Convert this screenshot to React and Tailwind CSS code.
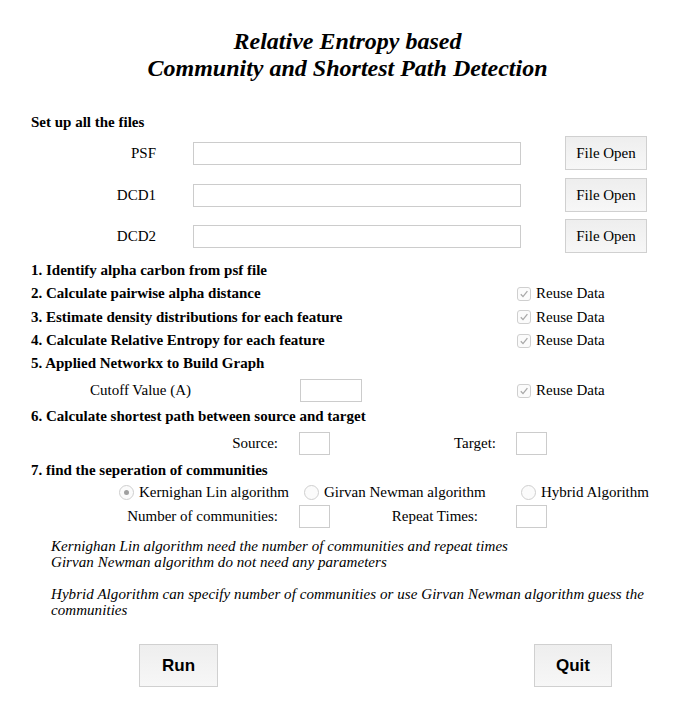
import React from "react";

const Check = () => (
  <span className="flex items-center justify-center w-[14px] h-[14px] border border-[#cfcfcf] rounded-[3px] bg-[#fbfbfb]">
    <svg width="10" height="10" viewBox="0 0 10 10">
      <path d="M1.8 5.2 L4 7.6 L8.4 2.2" fill="none" stroke="#a8a8a8" strokeWidth="1.3" />
    </svg>
  </span>
);

const Reuse = () => (
  <div className="flex items-center gap-[5px]">
    <Check />
    <span>Reuse Data</span>
  </div>
);

const Radio = ({ on }) => (
  <span className="flex items-center justify-center w-[15px] h-[15px] rounded-full border border-[#cfcfcf] bg-[#fbfbfb]">
    {on && <span className="w-[5px] h-[5px] rounded-full bg-[#a0a0a0]" />}
  </span>
);

const Box = ({ w }) => (
  <div className={`h-[23px] border border-[#cccccc] bg-white ${w}`} />
);

const FileRow = ({ label, mt }) => (
  <div className={`flex items-center h-[34px] ${mt}`}>
    <div className="w-[156px] text-right">{label}</div>
    <div className="ml-[37px] w-[328px] h-[23px] border border-[#cccccc] bg-white" />
    <button className="ml-[44px] w-[82px] h-[34px] border border-[#d0d0d0] bg-gradient-to-b from-[#eeeeee] to-[#f7f7f7] text-[15px]">
      File Open
    </button>
  </div>
);

export default function App() {
  return (
    <div className="w-[695px] h-[725px] bg-white text-black text-[15px] leading-none font-['Liberation_Serif',serif]">
      <div className="pt-[28px] text-center font-bold italic text-[24px] leading-[27px]">
        <div>Relative Entropy based</div>
        <div>Community and Shortest Path Detection</div>
      </div>

      <div className="mt-[30px] h-[20px] flex items-center pl-[31px] font-bold">Set up all the files</div>

      <div className="mt-[4px]">
        <FileRow label="PSF" mt="" />
        <FileRow label="DCD1" mt="mt-[8px]" />
        <FileRow label="DCD2" mt="mt-[7px]" />
      </div>

      <div className="mt-[6px]">
        <div className="h-[23.33px] flex items-center pl-[31px] font-bold">1. Identify alpha carbon from psf file</div>
        <div className="h-[23.33px] flex items-center pl-[31px]">
          <span className="w-[486px] font-bold">2. Calculate pairwise alpha distance</span>
          <Reuse />
        </div>
        <div className="h-[23.33px] flex items-center pl-[31px]">
          <span className="w-[486px] font-bold">3. Estimate density distributions for each feature</span>
          <Reuse />
        </div>
        <div className="h-[23.33px] flex items-center pl-[31px]">
          <span className="w-[486px] font-bold">4. Calculate Relative Entropy for each feature</span>
          <Reuse />
        </div>
        <div className="h-[23.33px] flex items-center pl-[31px] font-bold">5. Applied Networkx to Build Graph</div>
      </div>

      <div className="h-[30px] flex items-center pl-[90px]">
        <span className="w-[210px]">Cutoff Value (A)</span>
        <Box w="w-[62px]" />
        <span className="ml-[155px]"><Reuse /></span>
      </div>

      <div className="h-[21px] flex items-center pl-[31px] font-bold">6. Calculate shortest path between source and target</div>

      <div className="h-[33px] flex items-center">
        <span className="w-[278px] text-right">Source:</span>
        <span className="ml-[21px]"><Box w="w-[31px]" /></span>
        <span className="w-[166px] text-right">Target:</span>
        <span className="ml-[20px]"><Box w="w-[31px]" /></span>
      </div>

      <div className="h-[21px] flex items-center pl-[31px] font-bold">7. find the seperation of communities</div>

      <div className="h-[24px] flex items-center pl-[119px]">
        <div className="w-[185px] flex items-center gap-[5px]">
          <Radio on />
          <span>Kernighan Lin algorithm</span>
        </div>
        <div className="w-[217px] flex items-center gap-[5px]">
          <Radio />
          <span>Girvan Newman algorithm</span>
        </div>
        <div className="flex items-center gap-[5px]">
          <Radio />
          <span>Hybrid Algorithm</span>
        </div>
      </div>

      <div className="h-[24px] flex items-center">
        <span className="w-[278px] text-right">Number of communities:</span>
        <span className="ml-[21px]"><Box w="w-[31px]" /></span>
        <span className="w-[148px] text-right">Repeat Times:</span>
        <span className="ml-[38px]"><Box w="w-[31px]" /></span>
      </div>

      <div className="mt-[9px] pl-[51px] w-[660px] italic text-[15px] leading-[16px] tracking-[0.06px]">
        <div>Kernighan Lin algorithm need the number of communities and repeat times</div>
        <div>Girvan Newman algorithm do not need any parameters</div>
        <div className="h-[16px]" />
        <div>Hybrid Algorithm can specify number of communities or use Girvan Newman algorithm guess the communities</div>
      </div>

      <div className="mt-[26px] flex items-center">
        <button className="ml-[139px] w-[79px] h-[43px] border border-[#d0d0d0] bg-gradient-to-b from-[#eeeeee] to-[#f7f7f7] font-['Liberation_Sans',sans-serif] font-bold text-[17px]">
          Run
        </button>
        <button className="ml-[316px] w-[78px] h-[43px] border border-[#d0d0d0] bg-gradient-to-b from-[#eeeeee] to-[#f7f7f7] font-['Liberation_Sans',sans-serif] font-bold text-[17px]">
          Quit
        </button>
      </div>
    </div>
  );
}
